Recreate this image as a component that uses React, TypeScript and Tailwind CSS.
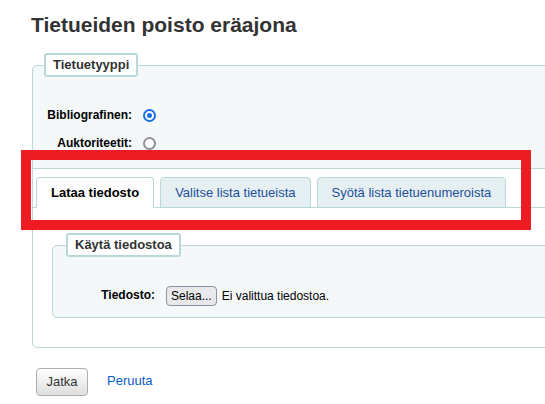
import React from 'react';

const Radio: React.FC<{ checked?: boolean }> = ({ checked }) =>
  checked ? (
    <span className="w-[13px] h-[13px] rounded-full border-2 border-[#1c6ee8] bg-white flex items-center justify-center">
      <span className="block w-[5px] h-[5px] rounded-full bg-[#1c6ee8]" />
    </span>
  ) : (
    <span className="block w-[13px] h-[13px] rounded-full border-2 border-[#8f8f9d] bg-white" />
  );

const tabs = [
  { label: 'Lataa tiedosto', active: true },
  { label: 'Valitse lista tietueista', active: false },
  { label: 'Syötä lista tietuenumeroista', active: false },
];

const App: React.FC = () => {
  return (
    <div className="relative w-[545px] h-[404px] overflow-hidden bg-white text-[#222] font-['Liberation_Sans',Arial,sans-serif]">
      <div className="pt-[14px] pl-[31px]">
        <h1 className="text-[21px] leading-[21px] font-bold text-[#333]">Tietueiden poisto eräajona</h1>

        {/* Record type */}
        <fieldset className="mt-[18px] ml-px w-[560px] border border-[#b9d8d9] rounded-[5px] bg-[#f4f8f9] p-0">
          <legend className="ml-[11px] px-[7px] py-[2px] text-[13px] leading-[16px] font-bold text-[#333] bg-white border-2 border-[#b9d8d9] rounded-[3px]">
            Tietuetyyppi
          </legend>
          <div className="pt-[24px] pb-[11px]">
            <div className="h-[28px] flex items-center">
              <label className="w-[99px] text-right text-[12px] font-bold text-black">Bibliografinen:</label>
              <span className="ml-[11px]"><Radio checked /></span>
            </div>
            <div className="h-[28px] flex items-center">
              <label className="w-[99px] text-right text-[12px] font-bold text-black">Auktoriteetit:</label>
              <span className="ml-[11px]"><Radio /></span>
            </div>
          </div>

          {/* Tabs */}
          <div className="bg-white border-t border-[#b9d8d9] pt-[8px] pb-[29px] rounded-b-[5px]">
            <ul className="flex gap-[6px] border-b border-[#b9d8d9] pl-[3px]">
              {tabs.map((t) => (
                <li
                  key={t.label}
                  className={
                    t.active
                      ? 'h-[31px] -mb-px px-[14px] flex items-center rounded-t-[4px] border border-[#b9d8d9] border-b-white bg-white text-[13px] font-bold text-black'
                      : 'h-[31px] -mb-px px-[14px] flex items-center rounded-t-[4px] border border-[#b9d8d9] bg-[#e6f0f2] text-[13px] text-[#1d4f9a]'
                  }
                >
                  {t.label}
                </li>
              ))}
            </ul>

            <fieldset className="mt-[25px] ml-[19px] border border-[#b9d8d9] rounded-[5px] bg-[#f4f8f9] p-0">
              <legend className="ml-[13px] px-[7px] py-[2px] text-[13px] leading-[16px] font-bold text-[#333] bg-white border-2 border-[#b9d8d9] rounded-[3px]">
                Käytä tiedostoa
              </legend>
              <div className="pt-[25px] pb-[7px]">
                <div className="h-[28px] flex items-center">
                  <label className="w-[102px] text-right text-[12px] font-bold text-black -mt-[3px]">Tiedosto:</label>
                  <button className="ml-[11px] h-[20px] px-[4px] border border-[#8f8f9d] rounded-[4px] bg-[#e9e9ed] text-[12px] text-black">
                    Selaa...
                  </button>
                  <span className="ml-[5px] text-[12px] text-black">Ei valittua tiedostoa.</span>
                </div>
              </div>
            </fieldset>
          </div>
        </fieldset>

        <div className="mt-[20px] ml-[5px] flex items-center">
          <button className="w-[52px] h-[28px] border border-[#adadad] rounded-[4px] bg-linear-to-b from-white to-[#dedede] text-[13px] text-[#333]">
            Jatka
          </button>
          <a href="#" className="ml-[19px] -mt-[2px] text-[13px] text-[#0a5bc4]">Peruuta</a>
        </div>
      </div>

      {/* annotation */}
      <div className="absolute left-[21px] top-[150px] w-[510px] h-[80px] border-[10px] border-[#ed1c24]" />
    </div>
  );
};

export default App;
